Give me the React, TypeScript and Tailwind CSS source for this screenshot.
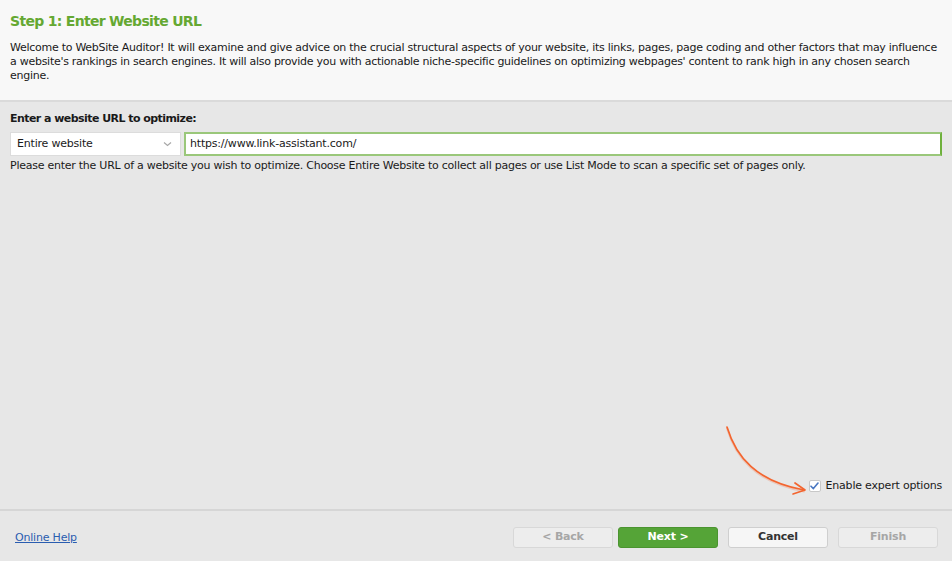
const font = { fontFamily: '"DejaVu Sans", "Liberation Sans", sans-serif' };

const App = () => {
  return (
    <div
      className="w-[952px] h-[561px] bg-[#e7e7e7] flex flex-col text-[11px] text-[#1a1a1a] overflow-hidden"
      style={font}
    >
      <div className="bg-[#f8f8f8] border-b-2 border-[#dadada] h-[102px] px-[10px] pt-[10px]">
        <h1 className="text-[14px] font-bold text-[#65a832] leading-[20px] tracking-[-0.7px] mt-[1px]">
          Step 1: Enter Website URL
        </h1>
        <p className="mt-[10px] leading-[14px] tracking-[-0.27px]">
          Welcome to WebSite Auditor! It will examine and give advice on the crucial structural aspects of your website, its links, pages, page coding and other factors that may influence a website's rankings in search engines. It will also provide you with actionable niche-specific guidelines on optimizing webpages' content to rank high in any chosen search engine.
        </p>
      </div>

      <div className="flex-1 px-[10px] pt-[9px] flex flex-col">
        <div className="font-bold leading-[16px] tracking-[-0.55px]">Enter a website URL to optimize:</div>
        <div className="flex gap-[3px] mt-[5px] h-[24px]">
          <div className="w-[171px] bg-white border border-[#dcdcdc] flex items-center justify-between pl-[6px] pr-[8px]">
            <span className="tracking-[-0.2px]">Entire website</span>
            <svg width="9" height="6" viewBox="0 0 9 6" fill="none">
              <path d="M1 1.5 L4.5 4.5 L8 1.5" stroke="#a8a8a8" strokeWidth="1.2" />
            </svg>
          </div>
          <div className="flex-1 bg-white border-2 border-[#9ac77a] border-r-[#6fb13d] flex items-center pl-[4px]">
            <span className="tracking-[-0.2px]">https://www.link-assistant.com/</span>
          </div>
        </div>
        <div className="mt-[3px] leading-[14px] tracking-[-0.25px]">
          Please enter the URL of a website you wish to optimize. Choose Entire Website to collect all pages or use List Mode to scan a specific set of pages only.
        </div>

        <div className="flex-1" />

        <div className="flex justify-end items-center pb-[15px] relative">
          <svg
            className="absolute right-[128px] bottom-[12px]"
            width="90"
            height="72"
            viewBox="0 0 90 72"
            fill="none"
          >
            <path
              d="M3 2 C 12 32, 32 56, 80 65"
              stroke="#f26a3a"
              strokeWidth="2"
              strokeLinecap="round"
              opacity="0.25"
              transform="translate(0 1.5)"
            />
            <path
              d="M3 2 C 12 32, 32 56, 80 65"
              stroke="#f3652f"
              strokeWidth="1.7"
              strokeLinecap="round"
            />
            <path
              d="M71 58 L81 65 L69 69"
              stroke="#f3652f"
              strokeWidth="1.7"
              strokeLinecap="round"
              strokeLinejoin="round"
            />
          </svg>
          <div className="w-[12px] h-[12px] bg-white border border-[#c8c8c8] rounded-[2px] flex items-center justify-center mr-[5px]">
            <svg width="9" height="8" viewBox="0 0 9 8" fill="none">
              <path d="M1 4.2 L3.4 6.6 L8 1" stroke="#4a78c2" strokeWidth="1.6" strokeLinecap="round" strokeLinejoin="round" />
            </svg>
          </div>
          <span className="tracking-[-0.2px]">Enable expert options</span>
        </div>
      </div>

      <div className="h-[52px] border-t-2 border-[#d6d6d6] flex items-center pl-[15px] pr-[14px] pt-[3px]">
        <a href="#" className="text-[#2a5db0] underline tracking-[-0.2px] mt-[1px]">
          Online Help
        </a>
        <div className="flex-1" />
        <div className="flex items-center">
          <button className="w-[100px] h-[21px] rounded-[3px] bg-[#ededed] border border-[#d8d8d8] text-[#a6a6a6] font-bold tracking-[-0.2px]">
            &lt; Back
          </button>
          <button className="w-[100px] h-[21px] rounded-[3px] bg-[#55a437] border border-[#4b9430] text-white font-bold ml-[5px] tracking-[-0.2px]">
            Next &gt;
          </button>
          <button className="w-[100px] h-[21px] rounded-[3px] bg-[#f6f6f6] border border-[#cfcfcf] text-[#333] font-bold ml-[10px] tracking-[-0.2px]">
            Cancel
          </button>
          <button className="w-[100px] h-[21px] rounded-[3px] bg-[#ededed] border border-[#d8d8d8] text-[#a6a6a6] font-bold ml-[10px] tracking-[-0.2px]">
            Finish
          </button>
        </div>
      </div>
    </div>
  );
};

export default App;
